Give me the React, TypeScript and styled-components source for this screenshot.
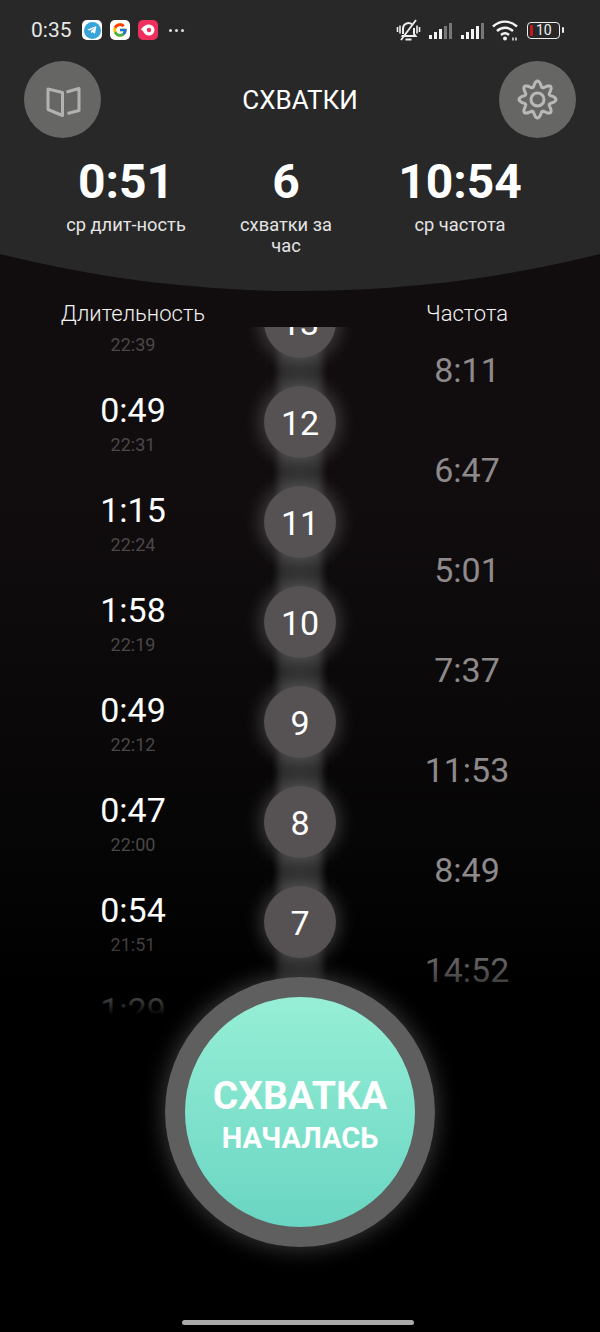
import React from 'react'
import styled, { createGlobalStyle } from 'styled-components'
import { FcGoogle } from 'react-icons/fc'
import { FaTelegramPlane } from 'react-icons/fa'

const GlobalStyle = createGlobalStyle`
	html, body {
		margin: 0;
		padding: 0;
		background: #000;
	}

	* {
		box-sizing: border-box;
	}
`

const Page = styled.div`
	width: 600px;
	height: 1332px;
	overflow: hidden;
	display: flex;
	flex-direction: column;
	font-family: Roboto, "Noto Sans", sans-serif;
	color: #fff;
	background: linear-gradient(#120e10 0, #110d0f 500px, #060505 850px, #000 1000px);
`

const Header = styled.header`
	height: 291px;
	flex: none;
	background: #282828;
	clip-path: circle(1235px at 50% -944px);
`

const StatusBar = styled.div`
	height: 61px;
	padding: 0 37px 1px 31px;
	display: flex;
	align-items: center;
`

const Clock = styled.span`
	width: 51px;
	font-size: 21px;
	font-weight: 400;
	color: #e6e6e6;
`

const AppIcon = styled.span<{ $bg: string }>`
	width: 20px;
	height: 20px;
	margin-right: 8px;
	border-radius: 5px;
	background: ${(p) => p.$bg};
	display: flex;
	align-items: center;
	justify-content: center;
`

const TelegramDisc = styled.span`
	width: 17px;
	height: 17px;
	border-radius: 50%;
	background: #38a5da;
	color: #fff;
	font-size: 10px;
	display: flex;
	align-items: center;
	justify-content: center;
`

const Dots = styled.span`
	margin-left: 3px;
	display: flex;
	gap: 3px;

	i {
		width: 3px;
		height: 3px;
		border-radius: 50%;
		background: #ddd;
	}
`

const StatusRight = styled.div`
	margin-left: auto;
	display: flex;
	align-items: center;
`

const Signal = styled.span`
	width: 24px;
	height: 17px;
	margin-left: 8px;
	display: flex;
	align-items: flex-end;
	gap: 2px;
`

const SignalBar = styled.i<{ $h: number; $dim: boolean }>`
	width: 3px;
	height: ${(p) => p.$h}px;
	background: ${(p) => (p.$dim ? '#777' : '#f2f2f2')};
`

const WifiSlot = styled.span`
	margin-left: 7px;
	display: flex;
`

const Battery = styled.span`
	position: relative;
	width: 33px;
	height: 17px;
	margin-left: 8px;
	margin-right: 3px;
	border: 1.5px solid #eee;
	border-radius: 4px;
	display: flex;
	align-items: center;
	padding-left: 2px;
	font-size: 14px;
	line-height: 14px;
	color: #f0f0f0;

	&::before {
		content: '';
		width: 3px;
		height: 11px;
		margin-right: 3px;
		background: #c4161c;
	}

	&::after {
		content: '';
		position: absolute;
		right: -5px;
		top: 4px;
		width: 2px;
		height: 6px;
		border-radius: 1px;
		background: #eee;
	}
`

const TopRow = styled.div`
	height: 77px;
	padding: 0 24px;
	display: flex;
	align-items: center;
	justify-content: space-between;
`

const RoundButton = styled.button`
	width: 77px;
	height: 77px;
	padding: 0;
	border: 0;
	border-radius: 50%;
	background: #666665;
	display: flex;
	align-items: center;
	justify-content: center;
`

const Title = styled.h1`
	margin: 0;
	font-size: 26px;
	font-weight: 400;
	color: #fff;
`

const Stats = styled.div`
	margin-top: 16px;
	padding-left: 51px;
	display: grid;
	grid-template-columns: 150px 120px 178px;
	column-gap: 25px;
	text-align: center;
`

const StatValue = styled.div`
	height: 56px;
	font-size: 48px;
	line-height: 56px;
	font-weight: 700;
`

const StatLabel = styled.div`
	margin-top: 4px;
	font-size: 18.3px;
	line-height: 21px;
	color: #e4e4e4;
`

const Columns = styled.div`
	padding: 0 50px;
	display: grid;
	grid-template-columns: 166px 168px 166px;
	text-align: center;
`

const Headings = styled(Columns)`
	height: 36px;
	flex: none;
	padding-top: 9px;
	font-size: 22px;
	line-height: 28px;
	font-weight: 300;
	color: #f2f2f2;
`

const ListViewport = styled.div`
	position: relative;
	height: 688px;
	flex: none;
	overflow: hidden;

	&::after {
		content: '';
		position: absolute;
		left: 0;
		right: 0;
		bottom: 0;
		height: 85px;
		background: linear-gradient(rgba(0, 0, 0, 0), rgba(0, 0, 0, 0.42) 50%, rgba(0, 0, 0, 0.86) 90%, #000);
	}
`

const Column = styled.div<{ $offset: number }>`
	margin-top: ${(p) => p.$offset}px;
`

const DurationRow = styled.div`
	height: 100px;
	padding-top: 18px;
`

const Duration = styled.div`
	height: 40px;
	font-size: 34px;
	line-height: 40px;
	color: #fff;
`

const StartedAt = styled.div`
	margin-top: 5px;
	font-size: 18px;
	line-height: 20px;
	color: #4b4749;
`

const Bead = styled.div`
	position: relative;
	height: 100px;
	display: flex;
	align-items: center;
	justify-content: center;

	&::before {
		content: '';
		position: absolute;
		left: 64px;
		width: 40px;
		top: -20px;
		bottom: -20px;
		background: #2d2c2c;
		filter: blur(5px);
	}
`

const BeadCircle = styled.div`
	position: relative;
	z-index: 1;
	width: 72px;
	height: 72px;
	padding-top: 1px;
	border-radius: 50%;
	background: #565152;
	box-shadow: 0 0 18px 4px rgba(255, 255, 255, 0.2);
	display: flex;
	align-items: center;
	justify-content: center;
	font-size: 34px;
	color: #fff;
`

const Interval = styled.div`
	height: 100px;
	font-size: 34px;
	line-height: 100px;
	color: #8e8a8b;
`

const Footer = styled.div`
	flex: 1;
	position: relative;
	z-index: 2;
	display: flex;
	flex-direction: column;
	align-items: center;
`

const StartButton = styled.button`
	width: 270px;
	height: 270px;
	margin-top: -38px;
	padding: 0;
	border: 20px solid #5f5f5f;
	border-radius: 50%;
	background: linear-gradient(#9af1d7, #66d3c1);
	background-origin: border-box;
	box-shadow: 0 0 22px 2px rgba(255, 255, 255, 0.22);
	color: #fff;
	font-family: inherit;
	font-weight: 700;
	display: flex;
	flex-direction: column;
	align-items: center;
	justify-content: center;
`

const StartMain = styled.span`
	font-size: 39px;
	line-height: 44px;
	margin-top: 4px;
`

const StartSub = styled.span`
	font-size: 29px;
	line-height: 32px;
	margin-top: 4px;
`

const HomeBar = styled.div`
	width: 232px;
	height: 5px;
	margin-top: 73px;
	margin-right: 4px;
	border-radius: 3px;
	background: #aaa;
`

const durations = [
	{ value: '', time: '22:39' },
	{ value: '0:49', time: '22:31' },
	{ value: '1:15', time: '22:24' },
	{ value: '1:58', time: '22:19' },
	{ value: '0:49', time: '22:12' },
	{ value: '0:47', time: '22:00' },
	{ value: '0:54', time: '21:51' },
	{ value: '1:29', time: '' },
]

const intervals = ['8:11', '6:47', '5:01', '7:37', '11:53', '8:49', '14:52']
const beads = [13, 12, 11, 10, 9, 8, 7]

// wavy ring, one lobe on top
const gearPath = (() => {
	const points: string[] = []
	for (let i = 0; i < 96; i++) {
		const a = (i / 96) * Math.PI * 2
		const r = 15.6 + 2.9 * Math.cos(a * 8)
		const x = 20.5 + r * Math.sin(a)
		const y = 20.5 - r * Math.cos(a)
		points.push(`${x.toFixed(2)} ${y.toFixed(2)}`)
	}
	return `M${points.join('L')}Z`
})()

function MutedBell() {
	return (
		<svg width="25" height="25" viewBox="0 0 25 25" fill="none" stroke="#eee" strokeWidth="2">
			<path d="M7 16V10.5a5.5 5.5 0 0 1 9-4.2M18 10v6l1.5 2H5.5" />
			<path d="M9.5 21.5h6" />
			<path d="M5 22 20 2" strokeWidth="1.8" />
			<path d="M1.5 9v5M4 7.5v8M21 7.5v8M23.5 9v5" strokeWidth="1.6" />
		</svg>
	)
}

function Wifi() {
	return (
		<svg width="27" height="22" viewBox="0 0 27 22" fill="none" stroke="#f2f2f2" strokeWidth="2.4">
			<path d="M1 7.5c7-6.500 17-6.500 24 0" />
			<path d="M5 12c4.600-4.300 11.400-4.300 16 0" />
			<path d="M9 16c2.400-2.200 5.600-2.200 8 0" />
			<circle cx="13" cy="19.500" r="2" fill="#f2f2f2" stroke="none" />
			<path d="M21 18.500v3M24 18.500v3" strokeWidth="1.4" />
		</svg>
	)
}

function BookIcon() {
	return (
		<svg width="36" height="36" viewBox="0 0 36 36" fill="none" stroke="#b2b2b1" strokeWidth="3" strokeLinejoin="round">
			<path d="M3 7 17.500 10.500V33.500L3 27.500Z" />
			<path d="M21.500 10 34 6.500V28.500L22.500 31.500" />
		</svg>
	)
}

function GearIcon() {
	return (
		<svg width="41" height="41" viewBox="0 0 41 41" fill="none" stroke="#b9b9b8" strokeWidth="3">
			<path d={gearPath} strokeLinejoin="round" />
			<circle cx="20.500" cy="20.500" r="6.500" />
		</svg>
	)
}

function RecorderGlyph() {
	return (
		<svg width="16" height="12" viewBox="0 0 16 12">
			<path d="M1 5.500C3 2 6 .5 9 .5a5.500 5.500 0 1 1 0 11c-3 0-5-2-6-4.500Z" fill="#fff" />
			<circle cx="9" cy="6" r="2.200" fill="#ee2f5e" />
		</svg>
	)
}

export default function App() {
	return (
		<Page>
			<GlobalStyle />
			<Header>
				<StatusBar>
					<Clock>0:35</Clock>
					<AppIcon $bg="#fff">
						<TelegramDisc><FaTelegramPlane /></TelegramDisc>
					</AppIcon>
					<AppIcon $bg="#fff"><FcGoogle size={16} /></AppIcon>
					<AppIcon $bg="#ee2f5e"><RecorderGlyph /></AppIcon>
					<Dots><i /><i /><i /></Dots>
					<StatusRight>
						<MutedBell />
						<Signal>
							{[4, 7, 10, 13, 16].map((h, i) => <SignalBar key={h} $h={h} $dim={i > 2} />)}
						</Signal>
						<Signal>
							{[4, 7, 10, 13, 16].map((h, i) => <SignalBar key={h} $h={h} $dim={i > 3} />)}
						</Signal>
						<WifiSlot><Wifi /></WifiSlot>
						<Battery>10</Battery>
					</StatusRight>
				</StatusBar>
				<TopRow>
					<RoundButton><BookIcon /></RoundButton>
					<Title>СХВАТКИ</Title>
					<RoundButton><GearIcon /></RoundButton>
				</TopRow>
				<Stats>
					<div>
						<StatValue>0:51</StatValue>
						<StatLabel>ср длит-ность</StatLabel>
					</div>
					<div>
						<StatValue>6</StatValue>
						<StatLabel>схватки за час</StatLabel>
					</div>
					<div>
						<StatValue>10:54</StatValue>
						<StatLabel>ср частота</StatLabel>
					</div>
				</Stats>
			</Header>

			<Headings>
				<div>Длительность</div>
				<div />
				<div>Частота</div>
			</Headings>

			<ListViewport>
				<Columns>
					<Column $offset={-55}>
						{durations.map((d, i) => (
							<DurationRow key={i}>
								<Duration>{d.value}</Duration>
								<StartedAt>{d.time}</StartedAt>
							</DurationRow>
						))}
					</Column>
					<Column $offset={-55}>
						{beads.map((n) => (
							<Bead key={n}>
								<BeadCircle>{n}</BeadCircle>
							</Bead>
						))}
						<Bead />
					</Column>
					<Column $offset={-7}>
						{intervals.map((v, i) => <Interval key={i}>{v}</Interval>)}
					</Column>
				</Columns>
			</ListViewport>

			<Footer>
				<StartButton>
					<StartMain>СХВАТКА</StartMain>
					<StartSub>НАЧАЛАСЬ</StartSub>
				</StartButton>
				<HomeBar />
			</Footer>
		</Page>
	)
}
